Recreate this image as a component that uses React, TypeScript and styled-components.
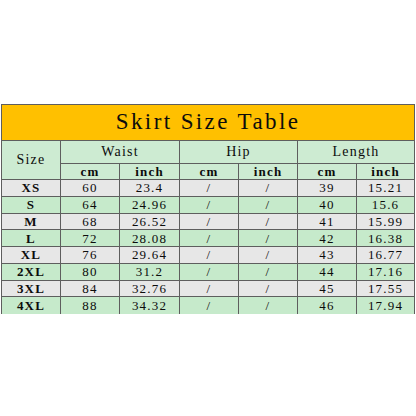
import React from "react";
import styled, { createGlobalStyle } from "styled-components";

const FONT = `"Liberation Serif", "DejaVu Serif", "Noto Serif", serif`;

const Global = createGlobalStyle`
  html, body { margin: 0; padding: 0; background: #ffffff; }
  body { font-family: ${FONT}; }
`;

const Page = styled.div`
  width: 416px;
  height: 416px;
  padding: 104px 0 0 1px;
  box-sizing: border-box;
  overflow: hidden;
`;

const Table = styled.table`
  width: 413px;
  border-collapse: collapse;
  table-layout: fixed;
  color: #0c0c0c;
  font-family: ${FONT};
`;

const Cell = styled.td<{ $bg?: string; $bold?: boolean; $size?: number; $h?: number }>`
  border: 1px solid #5e5e5e;
  background: ${(p) => p.$bg || "#ffffff"};
  text-align: center;
  vertical-align: middle;
  padding: 0;
  height: ${(p) => p.$h ?? 16.75}px;
  font-size: ${(p) => p.$size ?? 13}px;
  font-weight: ${(p) => (p.$bold ? 700 : 400)};
  letter-spacing: 1.2px;
  line-height: 1;
  box-sizing: border-box;
`;

const TitleCell = styled.td`
  background: #ffc000;
  border: 1px solid #5e5e5e;
  height: 36px;
  box-sizing: border-box;
  text-align: center;
  vertical-align: middle;
  font-size: 23px;
  letter-spacing: 2.4px;
  padding: 0 0 2px 0;
  line-height: 1;
`;

const LastRow = styled.tr`
  td { border-bottom: none; }
`;

const HEAD = "#cdebd2";
const GREEN = "#c6eacb";
const GRAY = "#e7e7e7";

const rows = [
  ["XS", "60", "23.4", "39", "15.21"],
  ["S", "64", "24.96", "40", "15.6"],
  ["M", "68", "26.52", "41", "15.99"],
  ["L", "72", "28.08", "42", "16.38"],
  ["XL", "76", "29.64", "43", "16.77"],
  ["2XL", "80", "31.2", "44", "17.16"],
  ["3XL", "84", "32.76", "45", "17.55"],
  ["4XL", "88", "34.32", "46", "17.94"],
];

const widths = [59, 59, 60, 59, 59, 59, 58];

export default function App() {
  return (
    <>
      <Global />
      <Page>
        <Table>
          <colgroup>
            {widths.map((w, i) => (
              <col key={i} style={{ width: w }} />
            ))}
          </colgroup>
          <tbody>
            <tr>
              <TitleCell colSpan={7}>Skirt Size Table</TitleCell>
            </tr>
            <tr>
              <Cell $bg={HEAD} rowSpan={2} $size={14}>Size</Cell>
              <Cell $bg={HEAD} colSpan={2} $size={14} $h={23}>Waist</Cell>
              <Cell $bg={HEAD} colSpan={2} $size={14} $h={23}>Hip</Cell>
              <Cell $bg={HEAD} colSpan={2} $size={14} $h={23}>Length</Cell>
            </tr>
            <tr>
              {["cm", "inch", "cm", "inch", "cm", "inch"].map((t, i) => (
                <Cell key={i} $bg={HEAD} $bold $h={16}>{t}</Cell>
              ))}
            </tr>
            {rows.map((r, i) => {
              const bg = i % 2 === 0 ? GRAY : GREEN;
              const cells = (
                <>
                  <Cell $bg={bg} $bold>{r[0]}</Cell>
                  <Cell $bg={bg}>{r[1]}</Cell>
                  <Cell $bg={bg}>{r[2]}</Cell>
                  <Cell $bg={bg}>/</Cell>
                  <Cell $bg={bg}>/</Cell>
                  <Cell $bg={bg}>{r[3]}</Cell>
                  <Cell $bg={bg}>{r[4]}</Cell>
                </>
              );
              return i === rows.length - 1 ? (
                <LastRow key={i}>{cells}</LastRow>
              ) : (
                <tr key={i}>{cells}</tr>
              );
            })}
          </tbody>
        </Table>
      </Page>
    </>
  );
}
